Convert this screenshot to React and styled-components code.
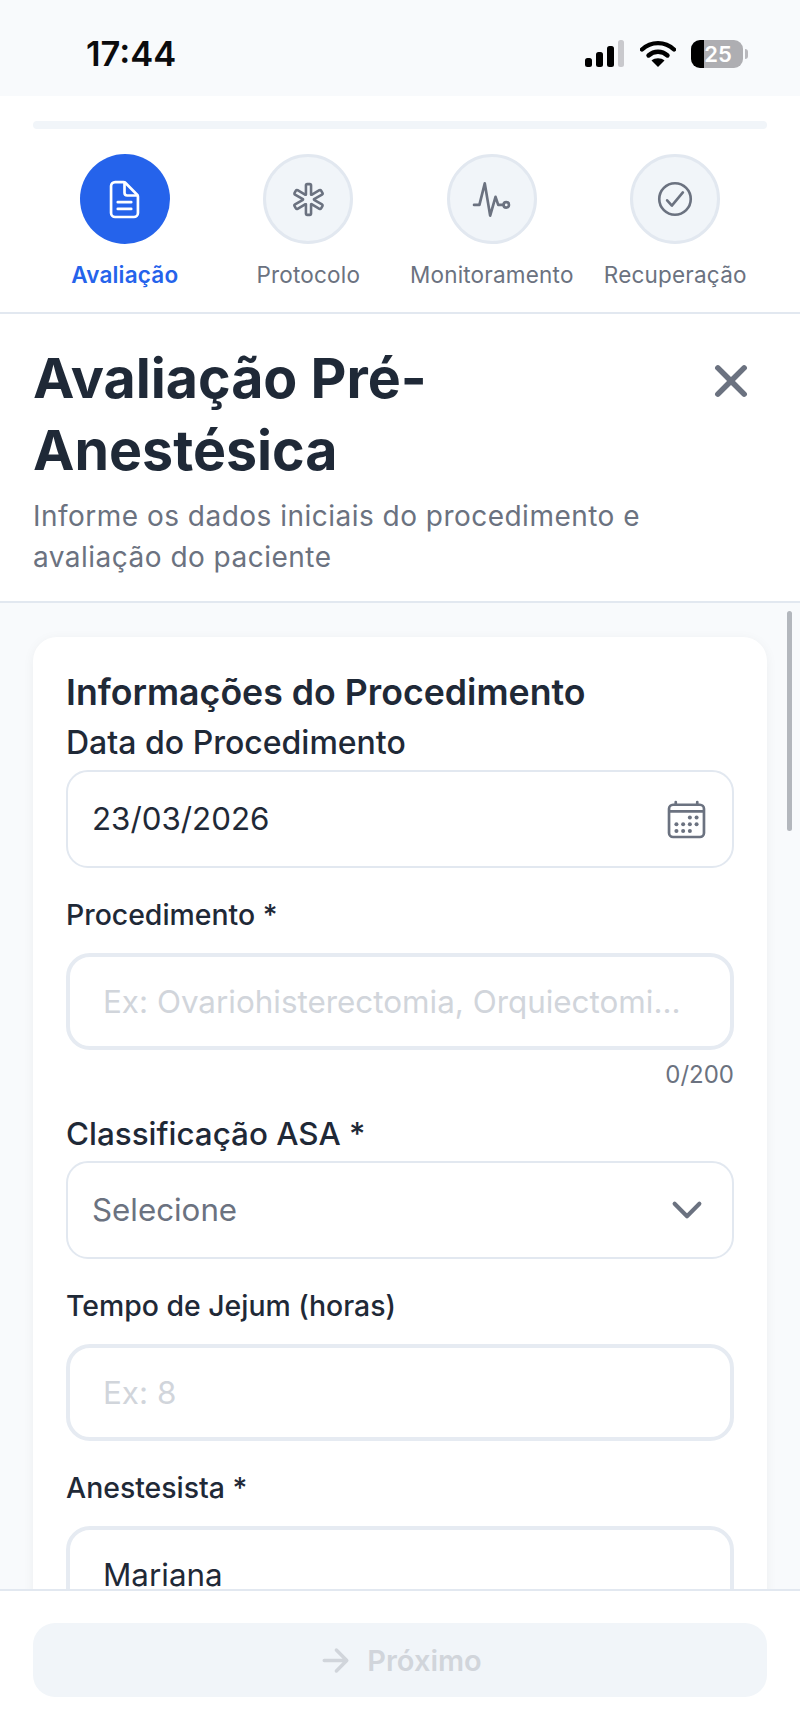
import React from "react";
import styled, { createGlobalStyle } from "styled-components";
import {
  IoDocumentTextOutline,
  IoMedicalOutline,
  IoPulseOutline,
  IoCheckmarkCircleOutline,
  IoCalendarOutline,
  IoChevronDown,
  IoClose,
  IoArrowForward,
} from "react-icons/io5";

const GlobalStyle = createGlobalStyle`
  * { box-sizing: border-box; }
  html, body { margin: 0; padding: 0; background: #fff; }
  body { font-family: Inter, "Liberation Sans", sans-serif; overflow: hidden; }
`;

const Screen = styled.div`
  width: 800px;
  height: 1731px;
  display: flex;
  flex-direction: column;
  background: #fff;
  overflow: hidden;
`;

const StatusBar = styled.div`
  height: 96px;
  flex: none;
  background: #f8fafc;
  display: flex;
  align-items: center;
  justify-content: space-between;
  padding: 11px 57px 0 86px;
`;

const Clock = styled.span`
  font-size: 34.5px;
  font-weight: 600;
  color: #0b0b0d;
`;

const StatusIcons = styled.div`
  display: flex;
  align-items: center;
  gap: 15px;
`;

const Battery = styled.div`
  position: relative;
  width: 52px;
  height: 28px;
  border-radius: 9px;
  background: linear-gradient(90deg, #000 0 13px, #aeaeb2 13px);
  color: #fff;
  font-size: 22px;
  font-weight: 600;
  display: flex;
  align-items: center;
  justify-content: center;
  padding-left: 2px;

  &::after {
    content: "";
    position: absolute;
    right: -5px;
    top: 9px;
    width: 3px;
    height: 10px;
    border-radius: 0 3px 3px 0;
    background: #b9b9bd;
  }
`;

const Stepper = styled.div`
  flex: none;
  height: 218px;
  padding: 25px 33px 0;
  border-bottom: 2px solid #e2e8f0;
`;

const ProgressTrack = styled.div`
  height: 8px;
  border-radius: 4px;
  background: #f1f5f9;
  margin-bottom: 25px;
`;

const Steps = styled.div`
  display: grid;
  grid-template-columns: repeat(4, 1fr);
`;

const Step = styled.div`
  display: flex;
  flex-direction: column;
  align-items: center;
  gap: 15px;
`;

const StepCircle = styled.div`
  width: 90px;
  height: 90px;
  border-radius: 50%;
  display: flex;
  align-items: center;
  justify-content: center;
  background: ${(p) => (p.$active ? "#2563eb" : "#f1f5f9")};
  border: ${(p) => (p.$active ? "none" : "3px solid #e2e8f0")};
  color: ${(p) => (p.$active ? "#fff" : "#6b7280")};
`;

const StepLabel = styled.span`
  font-size: 22.5px;
  line-height: 32px;
  white-space: nowrap;
  letter-spacing: 0.2px;
  font-weight: ${(p) => (p.$active ? 600 : 400)};
  color: ${(p) => (p.$active ? "#2563eb" : "#6b7280")};
`;

const PageHeader = styled.div`
  flex: none;
  height: 289px;
  padding: 28px 33px 0;
  display: flex;
  justify-content: space-between;
  align-items: flex-start;
  border-bottom: 2px solid #e2e8f0;
`;

const Title = styled.h1`
  margin: 0 0 10px;
  font-size: 55.5px;
  line-height: 72px;
  font-weight: 700;
  color: #1f2937;
  width: 520px;
`;

const Subtitle = styled.p`
  margin: 0;
  font-size: 28px;
  line-height: 41px;
  color: #6b7280;
  letter-spacing: 0.48px;
  width: 680px;
`;

const CloseButton = styled.div`
  color: #6b7280;
  display: flex;
  margin: 9px 6px 0 -100px;
`;

const Content = styled.div`
  flex: 1;
  min-height: 0;
  position: relative;
  overflow: hidden;
  background: #f8fafc;
  padding: 34px 33px 0;
`;

const ScrollThumb = styled.div`
  position: absolute;
  top: 8px;
  right: 8px;
  width: 5px;
  height: 220px;
  border-radius: 3px;
  background: #b3b7bd;
`;

const Card = styled.div`
  background: #fff;
  border-radius: 24px;
  padding: 33px 33px 0;
  box-shadow: 0 2px 12px rgba(15, 23, 42, 0.05);
`;

const SectionTitle = styled.h2`
  margin: 0 0 10px;
  font-size: 35.7px;
  line-height: 44px;
  font-weight: 600;
  color: #1f2937;
`;

const Field = styled.div`
  margin-bottom: 28px;
`;

const Label = styled.div`
  font-size: ${(p) => p.$size || 28.4}px;
  line-height: 38px;
  font-weight: 500;
  color: #1f2937;
  margin-bottom: ${(p) => (p.$size ? "8px" : "19px")};
`;

const Box = styled.div`
  height: 98px;
  border: 2px solid #e2e8f0;
  border-radius: 22px;
  background: #fff;
  padding: 0 24px;
  display: flex;
  align-items: center;
  justify-content: space-between;
  font-size: 31.3px;
  color: ${(p) => (p.$muted ? "#6b7280" : "#1f2937")};
`;

const TextInput = styled.input`
  display: block;
  width: 100%;
  height: 97px;
  border: 4px solid #e6ebf2;
  border-radius: 24px;
  background: #fff;
  padding: 0 33px;
  font-family: inherit;
  font-size: 31.4px;
  color: #1f2937;
  outline: none;

  &::placeholder {
    color: #d1d5db;
    opacity: 1;
  }
`;

const Counter = styled.div`
  text-align: right;
  font-size: 24px;
  line-height: 30px;
  color: #6b7280;
  margin-top: 10px;
  margin-bottom: -3px;
`;

const BoxIcon = styled.span`
  display: flex;
  color: #6b7280;
  margin-right: ${(p) => p.$inset || 0}px;
`;

const Footer = styled.div`
  flex: none;
  height: 142px;
  background: #fff;
  border-top: 2px solid #e2e8f0;
  padding: 32px 33px 0;
`;

const NextButton = styled.button`
  width: 100%;
  height: 74px;
  border: none;
  border-radius: 22px;
  background: #f1f5f9;
  color: #d1d5db;
  font-family: inherit;
  font-size: 29px;
  font-weight: 600;
  display: flex;
  align-items: center;
  justify-content: center;
  gap: 13px;
  padding: 0 1px 0 0;
`;

const SignalIcon = () => (
  <svg width="40" height="28" viewBox="0 0 40 28">
    <rect x="0" y="18" width="7" height="9" rx="2.5" fill="#000" />
    <rect x="11" y="12" width="7" height="15" rx="2.5" fill="#000" />
    <rect x="22" y="6" width="7" height="21" rx="2.5" fill="#000" />
    <rect x="33" y="0" width="6" height="27" rx="2.5" fill="#c9c9cd" />
  </svg>
);

const WifiIcon = () => (
  <svg width="36" height="27" viewBox="0 0 36 27" fill="none">
    <path d="M2 9.5C11 1 25 1 34 9.5" stroke="#000" strokeWidth="4.4" strokeLinecap="round" />
    <path d="M8.5 15.5C14 10.5 22 10.5 27.5 15.5" stroke="#000" strokeWidth="4.4" strokeLinecap="round" />
    <path d="M18 27L11.5 20.5C15 17.5 21 17.5 24.5 20.5Z" fill="#000" />
  </svg>
);

const steps = [
  { label: "Avaliação", Icon: IoDocumentTextOutline, size: 43, active: true },
  { label: "Protocolo", Icon: IoMedicalOutline, size: 41 },
  { label: "Monitoramento", Icon: IoPulseOutline, size: 43 },
  { label: "Recuperação", Icon: IoCheckmarkCircleOutline, size: 42 },
];

export default function App() {
  return (
    <Screen>
      <GlobalStyle />
      <StatusBar>
        <Clock>17:44</Clock>
        <StatusIcons>
          <SignalIcon />
          <WifiIcon />
          <Battery>25</Battery>
        </StatusIcons>
      </StatusBar>

      <Stepper>
        <ProgressTrack />
        <Steps>
          {steps.map(({ label, Icon, size, active }) => (
            <Step key={label}>
              <StepCircle $active={active}>
                <Icon size={size} />
              </StepCircle>
              <StepLabel $active={active}>{label}</StepLabel>
            </Step>
          ))}
        </Steps>
      </Stepper>

      <PageHeader>
        <div>
          <Title>Avaliação Pré-Anestésica</Title>
          <Subtitle>Informe os dados iniciais do procedimento e avaliação do paciente</Subtitle>
        </div>
        <CloseButton>
          <IoClose size={60} />
        </CloseButton>
      </PageHeader>

      <Content>
        <ScrollThumb />
        <Card>
          <SectionTitle>Informações do Procedimento</SectionTitle>
          <Field>
            <Label $size={32}>Data do Procedimento</Label>
            <Box>
              23/03/2026
              <BoxIcon>
                <IoCalendarOutline size={43} />
              </BoxIcon>
            </Box>
          </Field>
          <Field>
            <Label>Procedimento *</Label>
            <TextInput readOnly placeholder="Ex: Ovariohisterectomia, Orquiectomi..." />
            <Counter>0/200</Counter>
          </Field>
          <Field>
            <Label $size={31.4}>Classificação ASA *</Label>
            <Box $muted>
              Selecione
              <BoxIcon $inset={-1}>
                <IoChevronDown size={44} />
              </BoxIcon>
            </Box>
          </Field>
          <Field>
            <Label>Tempo de Jejum (horas)</Label>
            <TextInput readOnly placeholder="Ex: 8" />
          </Field>
          <Field>
            <Label>Anestesista *</Label>
            <TextInput readOnly defaultValue="Mariana" />
          </Field>
        </Card>
      </Content>

      <Footer>
        <NextButton type="button">
          <IoArrowForward size={37} />
          Próximo
        </NextButton>
      </Footer>
    </Screen>
  );
}
